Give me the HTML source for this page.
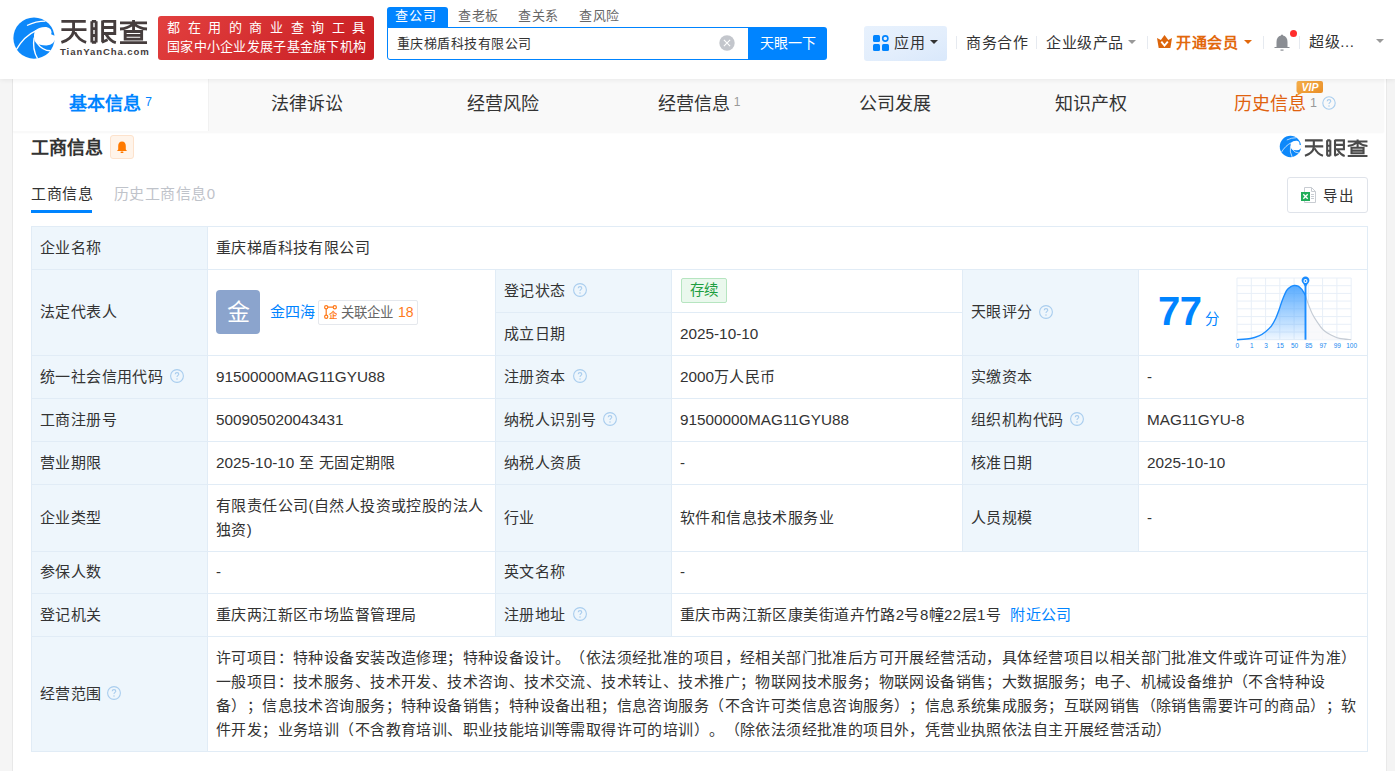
<!DOCTYPE html>
<html lang="zh-CN"><head><meta charset="utf-8">
<style>
*{margin:0;padding:0;box-sizing:border-box}
html,body{text-spacing-trim:space-all;width:1395px;height:771px;overflow:hidden;background:#f5f5f5;font-family:"Liberation Sans",sans-serif;color:#333}
.a{position:absolute;white-space:nowrap}
#hdr{position:absolute;left:0;top:0;width:1395px;height:79px;background:#fff;box-shadow:0 1px 5px rgba(0,0,0,.07);z-index:5}
#card{position:absolute;left:12px;top:79px;width:1374px;height:700px;background:#fff;border-left:1px solid #e8e8e8}
#tabs{position:absolute;left:13px;top:79px;width:1371px;height:53px;background:#f9f9f9;box-shadow:0 1px 1.5px rgba(0,0,0,.035)}
.tab{position:absolute;top:0;height:52px;line-height:51px;text-align:center;font-size:18px;color:#333;width:196px}
.sep{position:absolute;width:1px;background:#e6eaf0}
.caret{position:absolute;width:0;height:0;border-left:4px solid transparent;border-right:4px solid transparent;border-top:4px solid #999}
/* table */
.lb{position:absolute;background:#eef6fc}
.hl{position:absolute;height:1px;background:#e1ecf6}
.vl{position:absolute;width:1px;background:#e1ecf6}
.t{position:absolute;font-size:15px;letter-spacing:.41px;line-height:23.7px;color:#333;white-space:nowrap}
.n{font-size:15.3px;letter-spacing:0}
.wb{position:absolute;background:#fff}
.qi{position:absolute}
.q{position:absolute;width:14px;height:14px;border:1px solid #b9d0e8;border-radius:50%;color:#b9d0e8;font-size:10px;line-height:12px;text-align:center}
</style></head><body>
<div id="hdr">
  <!-- logo -->
  <svg class="a" style="left:10px;top:12px" width="50" height="50" viewBox="0 0 771 771">
    <circle cx="370" cy="402" r="318" fill="#0d88fa"/>
    <path d="M380 295 Q445 228 560 233 Q660 255 635 345 L705 375 Q695 515 560 515 Q450 515 400 475 Q352 410 380 295 Z" fill="#fff"/>
    <path d="M262 208 Q400 140 548 140" stroke="#fff" stroke-width="20" fill="none"/>
    <path d="M98 580 Q220 370 402 288" stroke="#fff" stroke-width="21" fill="none"/>
    <path d="M372 395 Q340 570 425 720" stroke="#fff" stroke-width="21" fill="none"/>
    <path d="M415 475 Q500 595 625 598" stroke="#fff" stroke-width="21" fill="none"/>
  </svg>
  <svg class="a" style="left:56px;top:14px" width="100" height="46" viewBox="0 0 1395 642">
    <g stroke="#453d3d" stroke-width="40" fill="none" stroke-linecap="butt">
      <path d="M75 103H415M75 218H425M245 103V240Q225 350 75 395M262 255Q310 360 420 395"/>
      <path d="M500 100V398M560 100V398M500 103H560M500 205H560M500 300H560M500 395H560"/>
      <path d="M650 90V395M650 103H820V272H650M650 188H820M700 285Q760 380 835 400M640 395L720 360"/>
      <path d="M893 123H1270M1082 85V235M1075 140Q1000 205 893 210M1090 140Q1165 205 1270 210M965 245H1195V350H965ZM965 298H1195M893 400H1270"/>
    </g>
  </svg>
  <div class="a" style="left:60px;top:46px;font-size:9.6px;line-height:12px;color:#453d3d;font-weight:bold;letter-spacing:.9px">TianYanCha.com</div>
  <!-- slogan -->
  <div class="a" style="left:158px;top:16px;width:216px;height:44px;border-radius:3px;background:linear-gradient(135deg,#e2403f,#c81d22)"></div>
  <div class="a" style="left:167px;top:19px;font-size:13px;line-height:18px;color:#fff;letter-spacing:7.6px;font-weight:500">都在用的商业查询工具</div>
  <div class="a" style="left:167px;top:38px;font-size:13px;line-height:18px;color:#fff;letter-spacing:.28px">国家中小企业发展子基金旗下机构</div>
  <!-- search -->
  <div class="a" style="left:387px;top:7px;width:61px;height:21px;background:#0084ff;border-radius:3px 3px 0 0"></div>
  <div class="a" style="left:395px;top:6px;font-size:13px;line-height:20px;color:#fff;letter-spacing:.9px">查公司</div>
  <div class="a" style="left:458px;top:6px;font-size:13px;line-height:20px;color:#666;letter-spacing:.6px">查老板</div>
  <div class="a" style="left:518px;top:6px;font-size:13px;line-height:20px;color:#666;letter-spacing:.6px">查关系</div>
  <div class="a" style="left:579px;top:6px;font-size:13px;line-height:20px;color:#666;letter-spacing:.6px">查风险</div>
  <div class="a" style="left:387px;top:27px;width:362px;height:33px;border:1px solid #0084ff;border-radius:0 0 0 3px;background:#fff"></div>
  <div class="a" style="left:397px;top:34px;font-size:13px;line-height:20px;color:#333;letter-spacing:.45px">重庆梯盾科技有限公司</div>
  <svg class="a" style="left:719px;top:34.5px" width="16" height="16" viewBox="0 0 16 16"><circle cx="8" cy="8" r="7.7" fill="#c3c6cc"/><path d="M4.9 4.9L11.1 11.1M11.1 4.9L4.9 11.1" stroke="#fff" stroke-width="1.1"/></svg>
  <div class="a" style="left:748px;top:27px;width:79px;height:33px;background:#0084ff;border-radius:0 3px 3px 0"></div>
  <div class="a" style="left:760px;top:33px;font-size:14px;line-height:20px;color:#fff;letter-spacing:0">天眼一下</div>
  <!-- right nav -->
  <div class="a" style="left:864px;top:26px;width:83px;height:35px;background:linear-gradient(160deg,#e7f1fd 0%,#e3eefc 55%,#d9e8fb 100%);border-radius:3px"></div>
  <svg class="a" style="left:873px;top:35px" width="16" height="16" viewBox="0 0 16 16">
    <rect x="0" y="0" width="7" height="7" rx="1.5" fill="#0084ff"/>
    <circle cx="12.3" cy="3.5" r="2.6" fill="none" stroke="#0084ff" stroke-width="1.6"/>
    <rect x="0" y="9" width="7" height="7" rx="1.5" fill="#0084ff"/>
    <rect x="9" y="9" width="7" height="7" rx="1.5" fill="#0084ff"/>
  </svg>
  <div class="a" style="left:894px;top:33px;font-size:15px;line-height:20px;color:#333;letter-spacing:.6px">应用</div>
  <div class="caret" style="left:930px;top:40px;border-top-color:#333"></div>
  <div class="sep" style="left:956px;top:36px;height:13px"></div>
  <div class="a" style="left:966px;top:33px;font-size:15px;line-height:20px;color:#333;letter-spacing:.6px">商务合作</div>
  <div class="sep" style="left:1036px;top:36px;height:13px"></div>
  <div class="a" style="left:1046px;top:33px;font-size:15px;line-height:20px;color:#333;letter-spacing:.5px">企业级产品</div>
  <div class="caret" style="left:1128px;top:40px;border-top-color:#999"></div>
  <div class="sep" style="left:1147px;top:36px;height:13px"></div>
  <svg class="a" style="left:1157px;top:35px" width="16" height="14" viewBox="0 0 16 14"><path d="M0 3L3.9 4.9L7.5 0L11.3 4.9L15 3L13.4 12.9H1.7Z" fill="#dc650b"/><path d="M4.3 6.6L7.5 10.6L10.8 6.6" stroke="#fff" stroke-width="1.9" fill="none"/></svg>
  <div class="a" style="left:1176px;top:33px;font-size:15px;line-height:20px;color:#e2680c;font-weight:bold;letter-spacing:.5px">开通会员</div>
  <div class="caret" style="left:1244px;top:40px;border-top-color:#e2680c"></div>
  <div class="sep" style="left:1263px;top:36px;height:13px"></div>
  <svg class="a" style="left:1274px;top:34px" width="16" height="17" viewBox="0 0 16 17"><path d="M8 0.5C9 0.5 9 1.5 9 1.5C12 2 13.5 4.5 13.5 8V13H15.5V14H0.5V13H2.5V8C2.5 4.5 4 2 7 1.5C7 1.5 7 0.5 8 0.5Z" fill="#8a8d93"/><rect x="6.5" y="15.5" width="3" height="1.2" fill="#8a8d93"/></svg>
  <div class="a" style="left:1290px;top:30px;width:7px;height:7px;border-radius:50%;background:#ff2d2d"></div>
  <div class="sep" style="left:1299px;top:36px;height:13px"></div>
  <div class="a" style="left:1309px;top:32px;font-size:15px;line-height:20px;color:#333;letter-spacing:.6px">超级...</div>
  <div class="caret" style="left:1376px;top:39px;border-top-color:#999"></div>
</div>

<div id="card"></div>
<div id="tabs">
  <div class="tab" style="left:0;width:196px;background:#fff;border-right:1px solid #f1f1f1;color:#0084ff;font-weight:bold">基本信息<span style="font-size:12px;font-weight:normal;margin-left:4px;vertical-align:top;position:relative;top:-2px">7</span></div>
  <div class="tab" style="left:196px">法律诉讼</div>
  <div class="tab" style="left:392px">经营风险</div>
  <div class="tab" style="left:588px">经营信息<span style="font-size:12px;color:#999;margin-left:4px;vertical-align:top;position:relative;top:-2px">1</span></div>
  <div class="tab" style="left:784px">公司发展</div>
  <div class="tab" style="left:980px">知识产权</div>
  <div class="a" style="left:1221px;top:0;font-size:18px;line-height:51px;color:#e0620f">历史信息</div>
  <div class="a" style="left:1297px;top:0;font-size:12.5px;line-height:48px;color:#999">1</div>
  <svg class="a" style="left:1309px;top:17px" width="14" height="14" viewBox="0 0 14 14"><circle cx="7" cy="7" r="6.2" fill="none" stroke="#a9cdee" stroke-width="1.1"/><path d="M5.2 5.3C5.2 4.2 6 3.6 7 3.6C8 3.6 8.8 4.2 8.8 5.2C8.8 6.4 7 6.5 7 7.9" fill="none" stroke="#a9cdee" stroke-width="1.1"/><circle cx="7" cy="10" r=".75" fill="#a9cdee"/></svg>
  <svg class="a" style="left:1283px;top:2px" width="28" height="15" viewBox="0 0 28 15"><defs><linearGradient id="vg" x1="0" y1="0" x2="1" y2="1"><stop offset="0" stop-color="#f6b04c"/><stop offset="1" stop-color="#e88a22"/></linearGradient></defs><path d="M2.5 0H25Q27 0 27 2V10Q27 12 25 12H6L0.5 15L2 12Q0.5 11.5 0.5 10V2Q0.5 0 2.5 0Z" fill="url(#vg)"/><text x="14" y="10" text-anchor="middle" font-family="Liberation Sans" font-weight="bold" font-style="italic" font-size="10.5" fill="#fff">VIP</text></svg>
</div>

<!-- section header -->
<div class="a" style="left:31px;top:135px;font-size:18px;line-height:26px;font-weight:bold;color:#333">工商信息</div>
<div class="a" style="left:110px;top:135px;width:24px;height:24px;background:#fff4ea;border:1px solid #fde2cc;border-radius:3px"></div>
<svg class="a" style="left:116px;top:141px" width="12" height="12" viewBox="0 0 12 12"><path d="M6 0.5C8.5 0.5 9.8 2.5 9.8 5V8.5L11 10H1L2.2 8.5V5C2.2 2.5 3.5 0.5 6 0.5Z" fill="#ff7a00"/><rect x="4.5" y="10.5" width="3" height="1.5" rx=".7" fill="#ff7a00"/></svg>
<div class="a" style="left:31px;top:183px;font-size:15px;line-height:22px;color:#333;letter-spacing:.5px">工商信息</div>
<div class="a" style="left:31px;top:210px;width:61px;height:3px;background:#0084ff"></div>
<div class="a" style="left:114px;top:183px;font-size:15px;line-height:22px;color:#bfc3ca;letter-spacing:.45px">历史工商信息0</div>

<!-- table placeholder -->
<div id="tbl">
<div class="wb" style="left:31px;top:226px;width:1337px;height:526px"></div>
<div class="lb" style="left:31px;top:226px;width:176px;height:525px"></div>
<div class="lb" style="left:495px;top:269px;width:176px;height:367px"></div>
<div class="lb" style="left:962px;top:269px;width:176px;height:282px"></div>
<div class="hl" style="left:31px;top:226px;width:1337px"></div>
<div class="hl" style="left:31px;top:269px;width:1337px"></div>
<div class="hl" style="left:31px;top:355px;width:1337px"></div>
<div class="hl" style="left:31px;top:398px;width:1337px"></div>
<div class="hl" style="left:31px;top:441px;width:1337px"></div>
<div class="hl" style="left:31px;top:484px;width:1337px"></div>
<div class="hl" style="left:31px;top:551px;width:1337px"></div>
<div class="hl" style="left:31px;top:593px;width:1337px"></div>
<div class="hl" style="left:31px;top:636px;width:1337px"></div>
<div class="hl" style="left:31px;top:751px;width:1337px"></div>
<div class="hl" style="left:495px;top:312px;width:467px"></div>
<div class="vl" style="left:31px;top:226px;height:525px"></div>
<div class="vl" style="left:1367px;top:226px;height:525px"></div>
<div class="vl" style="left:207px;top:226px;height:525px"></div>
<div class="vl" style="left:495px;top:269px;height:367px"></div>
<div class="vl" style="left:671px;top:269px;height:367px"></div>
<div class="vl" style="left:962px;top:269px;height:282px"></div>
<div class="vl" style="left:1138px;top:269px;height:282px"></div>
<div class="t" style="left:40px;top:236px">企业名称</div>
<div class="t" style="left:216px;top:236px">重庆梯盾科技有限公司</div>
<div class="t" style="left:40px;top:300px">法定代表人</div>
<div class="t" style="left:504px;top:279px">登记状态</div>
<svg class="qi" style="left:573px;top:283.2px" width="14" height="14" viewBox="0 0 14 14"><circle cx="7" cy="7" r="6.4" fill="none" stroke="#a9cdee" stroke-width="1.1"/><path d="M5.2 5.3C5.2 4.2 6 3.6 7 3.6C8 3.6 8.8 4.2 8.8 5.2C8.8 6.4 7 6.5 7 7.9" fill="none" stroke="#a9cdee" stroke-width="1.1"/><circle cx="7" cy="10" r=".75" fill="#a9cdee"/></svg>
<div class="t" style="left:504px;top:322px">成立日期</div>
<div class="t" style="left:680px;top:322px"><span class="n">2025-10-10</span></div>
<div class="t" style="left:971px;top:300px">天眼评分</div>
<svg class="qi" style="left:1039px;top:304.7px" width="14" height="14" viewBox="0 0 14 14"><circle cx="7" cy="7" r="6.4" fill="none" stroke="#a9cdee" stroke-width="1.1"/><path d="M5.2 5.3C5.2 4.2 6 3.6 7 3.6C8 3.6 8.8 4.2 8.8 5.2C8.8 6.4 7 6.5 7 7.9" fill="none" stroke="#a9cdee" stroke-width="1.1"/><circle cx="7" cy="10" r=".75" fill="#a9cdee"/></svg>
<div class="t" style="left:40px;top:365px">统一社会信用代码</div>
<svg class="qi" style="left:170px;top:369.2px" width="14" height="14" viewBox="0 0 14 14"><circle cx="7" cy="7" r="6.4" fill="none" stroke="#a9cdee" stroke-width="1.1"/><path d="M5.2 5.3C5.2 4.2 6 3.6 7 3.6C8 3.6 8.8 4.2 8.8 5.2C8.8 6.4 7 6.5 7 7.9" fill="none" stroke="#a9cdee" stroke-width="1.1"/><circle cx="7" cy="10" r=".75" fill="#a9cdee"/></svg>
<div class="t" style="left:216px;top:365px"><span class="n">91500000MAG11GYU88</span></div>
<div class="t" style="left:504px;top:365px">注册资本</div>
<svg class="qi" style="left:573px;top:369.2px" width="14" height="14" viewBox="0 0 14 14"><circle cx="7" cy="7" r="6.4" fill="none" stroke="#a9cdee" stroke-width="1.1"/><path d="M5.2 5.3C5.2 4.2 6 3.6 7 3.6C8 3.6 8.8 4.2 8.8 5.2C8.8 6.4 7 6.5 7 7.9" fill="none" stroke="#a9cdee" stroke-width="1.1"/><circle cx="7" cy="10" r=".75" fill="#a9cdee"/></svg>
<div class="t" style="left:680px;top:365px"><span class="n">2000</span>万人民币</div>
<div class="t" style="left:971px;top:365px">实缴资本</div>
<div class="t" style="left:1147px;top:365px">-</div>
<div class="t" style="left:40px;top:408px">工商注册号</div>
<div class="t" style="left:216px;top:408px"><span class="n">500905020043431</span></div>
<div class="t" style="left:504px;top:408px">纳税人识别号</div>
<svg class="qi" style="left:603px;top:412.2px" width="14" height="14" viewBox="0 0 14 14"><circle cx="7" cy="7" r="6.4" fill="none" stroke="#a9cdee" stroke-width="1.1"/><path d="M5.2 5.3C5.2 4.2 6 3.6 7 3.6C8 3.6 8.8 4.2 8.8 5.2C8.8 6.4 7 6.5 7 7.9" fill="none" stroke="#a9cdee" stroke-width="1.1"/><circle cx="7" cy="10" r=".75" fill="#a9cdee"/></svg>
<div class="t" style="left:680px;top:408px"><span class="n">91500000MAG11GYU88</span></div>
<div class="t" style="left:971px;top:408px">组织机构代码</div>
<svg class="qi" style="left:1070px;top:412.2px" width="14" height="14" viewBox="0 0 14 14"><circle cx="7" cy="7" r="6.4" fill="none" stroke="#a9cdee" stroke-width="1.1"/><path d="M5.2 5.3C5.2 4.2 6 3.6 7 3.6C8 3.6 8.8 4.2 8.8 5.2C8.8 6.4 7 6.5 7 7.9" fill="none" stroke="#a9cdee" stroke-width="1.1"/><circle cx="7" cy="10" r=".75" fill="#a9cdee"/></svg>
<div class="t" style="left:1147px;top:408px"><span class="n">MAG11GYU-8</span></div>
<div class="t" style="left:40px;top:451px">营业期限</div>
<div class="t" style="left:216px;top:451px"><span class="n">2025-10-10</span> 至 无固定期限</div>
<div class="t" style="left:504px;top:451px">纳税人资质</div>
<div class="t" style="left:680px;top:451px">-</div>
<div class="t" style="left:971px;top:451px">核准日期</div>
<div class="t" style="left:1147px;top:451px"><span class="n">2025-10-10</span></div>
<div class="t" style="left:40px;top:506px">企业类型</div>
<div class="t" style="left:216px;top:494px;width:270px;white-space:normal">有限责任公司(自然人投资或控股的法人独资)</div>
<div class="t" style="left:504px;top:506px">行业</div>
<div class="t" style="left:680px;top:506px">软件和信息技术服务业</div>
<div class="t" style="left:971px;top:506px">人员规模</div>
<div class="t" style="left:1147px;top:506px">-</div>
<div class="t" style="left:40px;top:560px">参保人数</div>
<div class="t" style="left:216px;top:560px">-</div>
<div class="t" style="left:504px;top:560px">英文名称</div>
<div class="t" style="left:680px;top:560px">-</div>
<div class="t" style="left:40px;top:603px">登记机关</div>
<div class="t" style="left:216px;top:603px">重庆两江新区市场监督管理局</div>
<div class="t" style="left:504px;top:603px">注册地址</div>
<svg class="qi" style="left:573px;top:607.2px" width="14" height="14" viewBox="0 0 14 14"><circle cx="7" cy="7" r="6.4" fill="none" stroke="#a9cdee" stroke-width="1.1"/><path d="M5.2 5.3C5.2 4.2 6 3.6 7 3.6C8 3.6 8.8 4.2 8.8 5.2C8.8 6.4 7 6.5 7 7.9" fill="none" stroke="#a9cdee" stroke-width="1.1"/><circle cx="7" cy="10" r=".75" fill="#a9cdee"/></svg>
<div class="t" style="left:680px;top:603px">重庆市两江新区康美街道卉竹路2号8幢22层1号<span style="color:#0084ff;margin-left:9px">附近公司</span></div>
<div class="t" style="left:40px;top:682px">经营范围</div>
<svg class="qi" style="left:107px;top:686.2px" width="14" height="14" viewBox="0 0 14 14"><circle cx="7" cy="7" r="6.4" fill="none" stroke="#a9cdee" stroke-width="1.1"/><path d="M5.2 5.3C5.2 4.2 6 3.6 7 3.6C8 3.6 8.8 4.2 8.8 5.2C8.8 6.4 7 6.5 7 7.9" fill="none" stroke="#a9cdee" stroke-width="1.1"/><circle cx="7" cy="10" r=".75" fill="#a9cdee"/></svg>
<div class="t" style="left:216px;top:646px">许可项目：特种设备安装改造修理；特种设备设计。（依法须经批准的项目，经相关部门批准后方可开展经营活动，具体经营项目以相关部门批准文件或许可证件为准）</div>
<div class="t" style="left:216px;top:670px">一般项目：技术服务、技术开发、技术咨询、技术交流、技术转让、技术推广；物联网技术服务；物联网设备销售；大数据服务；电子、机械设备维护（不含特种设</div>
<div class="t" style="left:216px;top:694px">备）；信息技术咨询服务；特种设备销售；特种设备出租；信息咨询服务（不含许可类信息咨询服务）；信息系统集成服务；互联网销售（除销售需要许可的商品）；软</div>
<div class="t" style="left:216px;top:718px">件开发；业务培训（不含教育培训、职业技能培训等需取得许可的培训）。（除依法须经批准的项目外，凭营业执照依法自主开展经营活动）</div>
<div class="a" style="left:216px;top:290px;width:44px;height:44px;border-radius:4px;background:#8ba4cd;color:#fff;font-size:23px;line-height:44px;text-align:center">金</div>
<div class="t" style="left:270px;top:300px;color:#0084ff;letter-spacing:0">金四海</div>
<div class="a" style="left:318px;top:300px;width:100px;height:25px;border:1px solid #e5e8ed;border-radius:2px;background:#fff"></div>
<svg class="a" style="left:324px;top:305px" width="13" height="14" viewBox="0 0 13 14"><circle cx="2.2" cy="2.2" r="1.6" fill="none" stroke="#ff7a1a" stroke-width="1.2"/><circle cx="10.8" cy="2.2" r="1.6" fill="none" stroke="#ff7a1a" stroke-width="1.2"/><circle cx="2.2" cy="11.8" r="1.6" fill="none" stroke="#ff7a1a" stroke-width="1.2"/><path d="M3.8 2.2H9.2M2.2 3.8V10.2" stroke="#ff7a1a" stroke-width="1.2"/><text x="9.3" y="13.3" text-anchor="middle" font-size="8.5" font-weight="bold" fill="#ff7a1a">企</text></svg>
<div class="a" style="left:341px;top:303px;font-size:13.4px;line-height:20px;color:#666">关联企业</div>
<div class="a" style="left:398px;top:302px;font-size:14px;line-height:20px;color:#ff7a1a">18</div>
<div class="a" style="left:681px;top:278px;width:46px;height:25px;border:1px solid #b6e5c0;border-radius:2px;background:#eaf8ed;color:#1e9e40;font-size:14.5px;line-height:23px;text-align:center">存续</div>
<div class="a" style="left:1158px;top:288px;font-size:40px;line-height:46px;font-weight:bold;color:#0084ff;letter-spacing:-0.5px">77</div>
<div class="a" style="left:1205px;top:309px;font-size:14.5px;line-height:20px;color:#0084ff">分</div>
<svg class="a" style="left:1234.4px;top:271.7px" width="124.19999999999982" height="79.69999999999999" viewBox="1234.4 271.7 124.19999999999982 79.69999999999999"><defs><linearGradient id="gf" x1="0" y1="0" x2="0" y2="1"><stop offset="0" stop-color="#3c9dff" stop-opacity=".85"/><stop offset="1" stop-color="#3c9dff" stop-opacity=".08"/></linearGradient></defs><line x1="1237.4" y1="277.7" x2="1237.4" y2="339.4" stroke="#e8eff8" stroke-width="1"/><line x1="1251.7" y1="277.7" x2="1251.7" y2="339.4" stroke="#e8eff8" stroke-width="1"/><line x1="1266.0" y1="277.7" x2="1266.0" y2="339.4" stroke="#e8eff8" stroke-width="1"/><line x1="1280.2" y1="277.7" x2="1280.2" y2="339.4" stroke="#e8eff8" stroke-width="1"/><line x1="1294.5" y1="277.7" x2="1294.5" y2="339.4" stroke="#e8eff8" stroke-width="1"/><line x1="1308.8" y1="277.7" x2="1308.8" y2="339.4" stroke="#e8eff8" stroke-width="1"/><line x1="1323.0" y1="277.7" x2="1323.0" y2="339.4" stroke="#e8eff8" stroke-width="1"/><line x1="1337.3" y1="277.7" x2="1337.3" y2="339.4" stroke="#e8eff8" stroke-width="1"/><line x1="1351.6" y1="277.7" x2="1351.6" y2="339.4" stroke="#e8eff8" stroke-width="1"/><line x1="1237.4" y1="277.7" x2="1351.6" y2="277.7" stroke="#e8eff8" stroke-width="1"/><line x1="1237.4" y1="285.4" x2="1351.6" y2="285.4" stroke="#e8eff8" stroke-width="1"/><line x1="1237.4" y1="293.1" x2="1351.6" y2="293.1" stroke="#e8eff8" stroke-width="1"/><line x1="1237.4" y1="300.8" x2="1351.6" y2="300.8" stroke="#e8eff8" stroke-width="1"/><line x1="1237.4" y1="308.5" x2="1351.6" y2="308.5" stroke="#e8eff8" stroke-width="1"/><line x1="1237.4" y1="316.3" x2="1351.6" y2="316.3" stroke="#e8eff8" stroke-width="1"/><line x1="1237.4" y1="324.0" x2="1351.6" y2="324.0" stroke="#e8eff8" stroke-width="1"/><line x1="1237.4" y1="331.7" x2="1351.6" y2="331.7" stroke="#e8eff8" stroke-width="1"/><line x1="1237.4" y1="339.4" x2="1351.6" y2="339.4" stroke="#e8eff8" stroke-width="1"/><path d="M1237.4 339.4 C1239.7 339.2 1247.2 338.8 1250.9 338.2 C1254.6 337.6 1256.8 336.7 1259.3 335.6 C1261.8 334.5 1263.9 333.1 1266.0 331.4 C1268.1 329.7 1270.2 327.8 1271.9 325.5 C1273.6 323.2 1274.9 320.6 1276.2 317.9 C1277.5 315.2 1278.4 312.6 1279.5 309.5 C1280.6 306.4 1281.6 302.6 1282.9 299.4 C1284.2 296.2 1285.7 292.3 1287.1 290.1 C1288.5 287.9 1290.0 287.1 1291.3 286.3 C1292.6 285.5 1293.5 285.3 1294.7 285.2 C1295.9 285.1 1297.3 285.3 1298.5 285.9 C1299.7 286.5 1300.8 287.6 1301.8 288.6 C1302.8 289.7 1303.5 291.1 1304.2 292.2 C1304.9 293.3 1305.6 294.7 1305.9 295.2 L1305.9 339.4 L1237.4 339.4 Z" fill="url(#gf)"/><path d="M1237.4 339.4 C1239.7 339.2 1247.2 338.8 1250.9 338.2 C1254.6 337.6 1256.8 336.7 1259.3 335.6 C1261.8 334.5 1263.9 333.1 1266.0 331.4 C1268.1 329.7 1270.2 327.8 1271.9 325.5 C1273.6 323.2 1274.9 320.6 1276.2 317.9 C1277.5 315.2 1278.4 312.6 1279.5 309.5 C1280.6 306.4 1281.6 302.6 1282.9 299.4 C1284.2 296.2 1285.7 292.3 1287.1 290.1 C1288.5 287.9 1290.0 287.1 1291.3 286.3 C1292.6 285.5 1293.5 285.3 1294.7 285.2 C1295.9 285.1 1297.3 285.3 1298.5 285.9 C1299.7 286.5 1300.8 287.6 1301.8 288.6 C1302.8 289.7 1303.5 291.1 1304.2 292.2 C1304.9 293.3 1305.6 294.7 1305.9 295.2" fill="none" stroke="#1a8cff" stroke-width="1.4"/><path d="M1305.9 295.2 C1306.4 296.6 1307.4 300.5 1308.6 303.6 C1309.8 306.7 1311.2 310.6 1312.8 313.7 C1314.3 316.8 1316.1 319.4 1317.9 322.1 C1319.7 324.8 1321.5 327.6 1323.8 329.7 C1326.0 331.8 1328.7 333.4 1331.4 334.8 C1334.1 336.2 1336.4 337.3 1339.8 338.1 C1343.2 338.9 1349.6 339.2 1351.6 339.4 L1351.6 339.4 L1305.9 339.4 Z" fill="#f7f8fa" opacity=".8"/><path d="M1305.9 295.2 C1306.4 296.6 1307.4 300.5 1308.6 303.6 C1309.8 306.7 1311.2 310.6 1312.8 313.7 C1314.3 316.8 1316.1 319.4 1317.9 322.1 C1319.7 324.8 1321.5 327.6 1323.8 329.7 C1326.0 331.8 1328.7 333.4 1331.4 334.8 C1334.1 336.2 1336.4 337.3 1339.8 338.1 C1343.2 338.9 1349.6 339.2 1351.6 339.4" fill="none" stroke="#c5ccd5" stroke-width="1.1"/><line x1="1305.9" y1="284" x2="1305.9" y2="339.4" stroke="#1a8cff" stroke-width="1.9"/><path d="M1305.9 287 L1303.3000000000002 283 A3.9 3.9 0 1 1 1308.5 283 Z" fill="#1a8cff"/><circle cx="1305.9" cy="280.7" r="2" fill="#fff"/><circle cx="1305.9" cy="280.7" r=".9" fill="#1a8cff"/></svg>
<div class="a" style="left:1227.4px;top:341px;width:20px;text-align:center;font-size:6.5px;line-height:9px;color:#2088f0">0</div>
<div class="a" style="left:1241.7px;top:341px;width:20px;text-align:center;font-size:6.5px;line-height:9px;color:#2088f0">1</div>
<div class="a" style="left:1256.0px;top:341px;width:20px;text-align:center;font-size:6.5px;line-height:9px;color:#2088f0">3</div>
<div class="a" style="left:1270.2px;top:341px;width:20px;text-align:center;font-size:6.5px;line-height:9px;color:#2088f0">15</div>
<div class="a" style="left:1284.5px;top:341px;width:20px;text-align:center;font-size:6.5px;line-height:9px;color:#2088f0">50</div>
<div class="a" style="left:1298.8px;top:341px;width:20px;text-align:center;font-size:6.5px;line-height:9px;color:#2088f0">85</div>
<div class="a" style="left:1313.0px;top:341px;width:20px;text-align:center;font-size:6.5px;line-height:9px;color:#2088f0">97</div>
<div class="a" style="left:1327.3px;top:341px;width:20px;text-align:center;font-size:6.5px;line-height:9px;color:#2088f0">99</div>
<div class="a" style="left:1341.6px;top:341px;width:20px;text-align:center;font-size:6.5px;line-height:9px;color:#2088f0">100</div>
</div>
<!-- right strip -->
<div class="a" style="left:1386px;top:79px;width:9px;height:692px;background:#f4f4f4;border-left:1px solid #e9e9e9"></div>
<!-- small logo -->
<svg class="a" style="left:1278.4px;top:133.4px" width="25.9" height="25.9" viewBox="0 0 771 771">
    <circle cx="370" cy="402" r="318" fill="#0d88fa"/>
    <path d="M380 295 Q445 228 560 233 Q660 255 635 345 L705 375 Q695 515 560 515 Q450 515 400 475 Q352 410 380 295 Z" fill="#fff"/>
    <path d="M262 208 Q400 140 548 140" stroke="#fff" stroke-width="20" fill="none"/>
    <path d="M98 580 Q220 370 402 288" stroke="#fff" stroke-width="21" fill="none"/>
    <path d="M372 395 Q340 570 425 720" stroke="#fff" stroke-width="21" fill="none"/>
    <path d="M415 475 Q500 595 625 598" stroke="#fff" stroke-width="21" fill="none"/>
  </svg>
<svg class="a" style="left:1301px;top:134.8px" width="73" height="33.6" viewBox="0 0 1395 642">
    <g stroke="#4a4a4a" stroke-width="40" fill="none" stroke-linecap="butt">
      <path d="M75 103H415M75 218H425M245 103V240Q225 350 75 395M262 255Q310 360 420 395"/>
      <path d="M500 100V398M560 100V398M500 103H560M500 205H560M500 300H560M500 395H560"/>
      <path d="M650 90V395M650 103H820V272H650M650 188H820M700 285Q760 380 835 400M640 395L720 360"/>
      <path d="M893 123H1270M1082 85V235M1075 140Q1000 205 893 210M1090 140Q1165 205 1270 210M965 245H1195V350H965ZM965 298H1195M893 400H1270"/>
    </g>
  </svg>
<!-- export -->
<div class="a" style="left:1287px;top:177px;width:81px;height:36px;border:1px solid #dfe3ea;border-radius:3px;background:#fff"></div>
<svg class="a" style="left:1301px;top:187px" width="16" height="16" viewBox="0 0 16 16">
  <path d="M3.5 0.5H10.5L14.5 4.5V15.5H3.5Z" fill="#fff" stroke="#c8ccd2" stroke-width="1"/>
  <path d="M10.5 0.5V4.5H14.5" fill="none" stroke="#c8ccd2" stroke-width="1"/>
  <rect x="10" y="7" width="3" height="1" fill="#c8ccd2"/><rect x="10" y="9" width="3" height="1" fill="#c8ccd2"/><rect x="10" y="11" width="3" height="1" fill="#c8ccd2"/>
  <rect x="0" y="5" width="9" height="9" fill="#21ad5a"/>
  <path d="M2.3 7.2L6.7 11.8M6.7 7.2L2.3 11.8" stroke="#fff" stroke-width="1.3"/>
</svg>
<div class="a" style="left:1323px;top:186px;font-size:14.5px;line-height:20px;color:#333;letter-spacing:1.5px">导出</div>

</body></html>
